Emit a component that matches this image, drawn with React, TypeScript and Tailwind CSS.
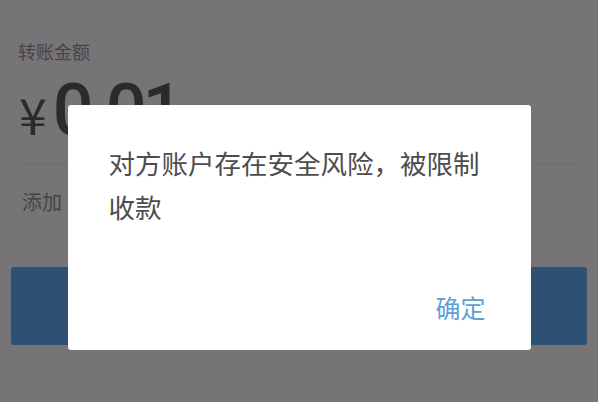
export default function App() {
  return (
    <div
      className="relative w-[598px] h-[402px] overflow-hidden bg-[#767476]"
      style={{ fontFamily: '"Noto Sans CJK SC", "Noto Sans", sans-serif' }}
    >
      {/* underlying transfer page (dimmed) */}
      <div className="flex flex-col pt-[38px]">
        <div className="pl-[18px] text-[18px] leading-[26px] text-[#454446]">转账金额</div>
        <div className="flex items-baseline pl-[19px] mt-[11px] h-[72px]">
          <span className="text-[50px] leading-none text-[#2b2a2c]">¥</span>
          <span
            className="ml-[6px] text-[72px] leading-none font-medium text-[#2b2a2c] tracking-[-4px]"
            style={{ fontFamily: 'Roboto, "Liberation Sans", sans-serif' }}
          >
            0.01
          </span>
        </div>
        <div className="mx-[22px] mt-[16px] h-px bg-[#6c6a6c]" />
        <div className="pl-[22px] mt-[26px] text-[20px] leading-[24px] text-[#454446]">添加</div>
        <div className="mx-[11px] mt-[53px] h-[78px] rounded-[3px] bg-[#2d5073]" />
      </div>

      {/* alert dialog */}
      <div className="absolute inset-0 flex justify-center pt-[105px]">
        <div className="w-[463px] h-[245px] bg-white rounded-[3px] flex flex-col">
          <div className="pl-[41px] pr-[36px] pt-[36px] text-[26.5px] leading-[44px] text-[#4d4d4d]">
            对方账户存在安全风险，被限制收款
          </div>
          <div className="mt-auto flex justify-end pr-[45px] pb-[28px]">
            <span className="text-[25px] leading-[30px] text-[#5f9fd4]">确定</span>
          </div>
        </div>
      </div>
    </div>
  );
}
